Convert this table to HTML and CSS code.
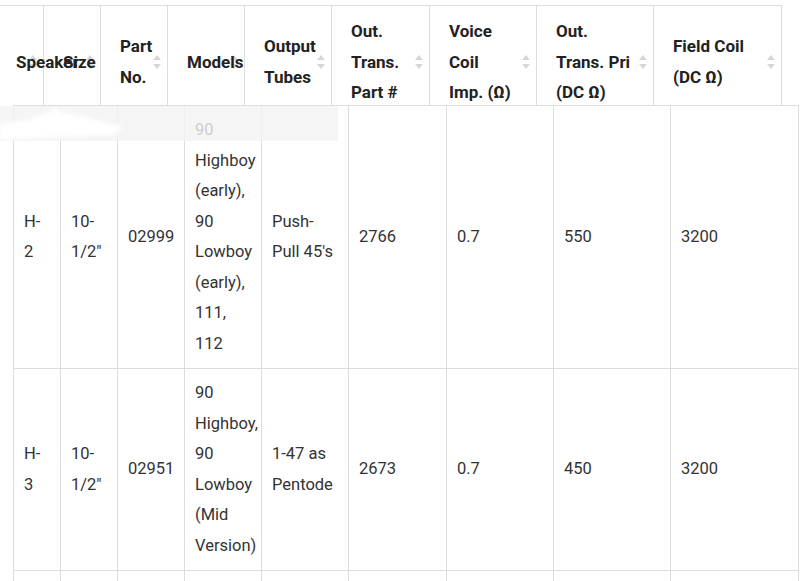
FILE: index.html
```html
<!DOCTYPE html>
<html lang="en">
<head>
<meta charset="utf-8">
<title>Speaker table</title>
<link rel="stylesheet" href="styles.css">
</head>
<body>
<div class="page">
  <div class="head">
    <table class="grid hgrid">
      <colgroup>
        <col class="c1"><col class="c2"><col class="c3"><col class="c4"><col class="c5"><col class="c6"><col class="c7"><col class="c8"><col class="c9">
      </colgroup>
      <tr>
        <th><span class="sort"></span><span class="lbl">Speaker</span></th>
        <th><span class="sort"></span><span class="lbl">Size</span></th>
        <th><span class="sort"></span><span class="lbl">Part No.</span></th>
        <th><span class="sort"></span><span class="lbl">Models</span></th>
        <th><span class="sort"></span><span class="lbl">Output Tubes</span></th>
        <th><span class="sort"></span><span class="lbl">Out. Trans. Part #</span></th>
        <th><span class="sort"></span><span class="lbl">Voice Coil Imp. (Ω)</span></th>
        <th><span class="sort"></span><span class="lbl">Out. Trans. Pri (DC Ω)</span></th>
        <th><span class="sort"></span><span class="lbl">Field Coil (DC Ω)</span></th>
      </tr>
    </table>
  </div>
  <div class="bodywrap">
    <table class="grid bgrid">
      <colgroup>
        <col class="c1"><col class="c2"><col class="c3"><col class="c4"><col class="c5"><col class="c6"><col class="c7"><col class="c8"><col class="c9">
      </colgroup>
      <tr>
        <td>H-2</td>
        <td>10-1/2"</td>
        <td>02999</td>
        <td>90 Highboy (early), 90 Lowboy (early), 111, 112</td>
        <td>Push-Pull 45's</td>
        <td>2766</td>
        <td>0.7</td>
        <td>550</td>
        <td>3200</td>
      </tr>
      <tr>
        <td>H-3</td>
        <td>10-1/2"</td>
        <td>02951</td>
        <td>90 Highboy, 90 Lowboy (Mid Version)</td>
        <td>1-47 as Pentode</td>
        <td>2673</td>
        <td>0.7</td>
        <td>450</td>
        <td>3200</td>
      </tr>
      <tr class="next">
        <td></td><td></td><td></td><td></td><td></td><td></td><td></td><td></td><td></td>
      </tr>
    </table>
  </div>
  <div class="fade">
    <svg class="smear" width="338" height="35" viewBox="0 0 338 35" aria-hidden="true">
      <defs>
        <filter id="blur" x="-20%" y="-50%" width="140%" height="200%">
          <feGaussianBlur stdDeviation="2"/>
        </filter>
      </defs>
      <path d="M0 18 L30 14 L48 6 L56 2 L64 7 L86 11 L106 17 L118 24 L110 29 L60 31 L20 33 L0 34 Z" fill="#ffffff" filter="url(#blur)"/>
      <path d="M96 21 L118 18 L122 25 L100 28 Z" fill="#ffffff" filter="url(#blur)"/>
    </svg>
  </div>
</div>
</body>
</html>
```

FILE: styles.css
```css
html, body {
  margin: 0;
  padding: 0;
  overflow: hidden;
  background: #ffffff;
}

.page {
  position: relative;
  width: 800px;
  height: 581px;
  overflow: hidden;
  font-family: Roboto, "Liberation Sans", Arial, sans-serif;
  color: #333333;
}

.grid {
  border-collapse: collapse;
  table-layout: fixed;
  width: 785px;
}

.grid th,
.grid td {
  border: 1px solid #dddddd;
}

.c1 { width: 47px; }
.c2 { width: 57px; }
.c3 { width: 67px; }
.c4 { width: 77px; }
.c5 { width: 87px; }
.c6 { width: 98px; }
.c7 { width: 107px; }
.c8 { width: 117px; }
.c9 { width: 128px; }

/* header */
.head {
  margin-top: 5px;
  height: 100px;
  overflow: hidden;
  background: #ffffff;
}

.hgrid {
  margin-left: -4px;
}

.hgrid th {
  position: relative;
  padding: 10px 22px 8px 19px;
  text-align: left;
  vertical-align: middle;
  font-weight: 700;
  font-size: 17px;
  line-height: 30.5px;
  color: #222222;
  white-space: normal;
}

.lbl {
  position: relative;
}

.sort {
  position: absolute;
  right: 6px;
  top: 50%;
  width: 8px;
  height: 14px;
  margin-top: -6px;
}

.sort::before,
.sort::after {
  content: "";
  position: absolute;
  left: 0;
  border-left: 4px solid transparent;
  border-right: 4px solid transparent;
}

.sort::before {
  top: 0;
  border-bottom: 5px solid #d6d6d6;
}

.sort::after {
  bottom: 0;
  border-top: 5px solid #d6d6d6;
}

/* body */
.bodywrap {
  padding-left: 13px;
}

.bgrid td {
  padding: 9px 12px 9px 10px;
  vertical-align: middle;
  text-align: left;
  font-size: 16.5px;
  line-height: 30.5px;
  color: #333333;
}

.bgrid .next td {
  height: 40px;
  padding: 0;
}

/* faded strip over the top of the body */
.fade {
  position: absolute;
  left: 0;
  top: 106px;
  width: 338px;
  height: 35px;
  background: rgba(242, 242, 242, 0.8);
}

.smear {
  display: block;
}
```
